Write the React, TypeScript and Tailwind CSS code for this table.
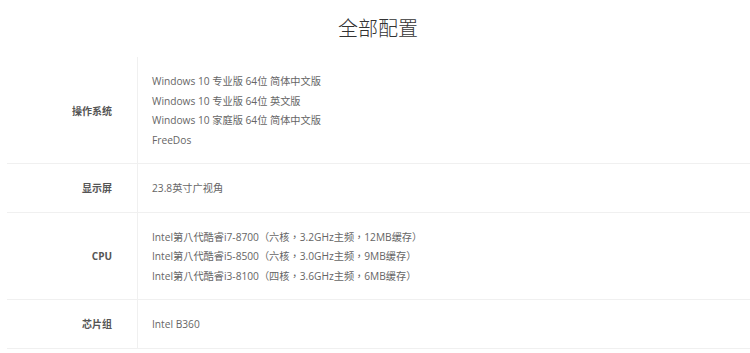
const rows: { label: string; lines: string[] }[] = [
  {
    label: "操作系统",
    lines: [
      "Windows 10 专业版 64位 简体中文版",
      "Windows 10 专业版 64位 英文版",
      "Windows 10 家庭版 64位 简体中文版",
      "FreeDos",
    ],
  },
  { label: "显示屏", lines: ["23.8英寸广视角"] },
  {
    label: "CPU",
    lines: [
      "Intel第八代酷睿i7-8700（六核，3.2GHz主频，12MB缓存）",
      "Intel第八代酷睿i5-8500（六核，3.0GHz主频，9MB缓存）",
      "Intel第八代酷睿i3-8100（四核，3.6GHz主频，6MB缓存）",
    ],
  },
  { label: "芯片组", lines: ["Intel B360"] },
];

export default function App() {
  return (
    <div
      className="w-[750px] h-[353px] overflow-hidden bg-white"
      style={{ fontFamily: '"Open Sans", "Noto Sans CJK SC", sans-serif' }}
    >
      <div className="h-[57px] flex items-center justify-center pl-[6px]">
        <h1 className="text-[20px] leading-[24px] text-[#333] font-light">全部配置</h1>
      </div>

      <div className="ml-[7px]">
        {rows.map((row) => (
          <div key={row.label} className="flex border-b border-[#f0f0f0]">
            <div className="w-[130px] shrink-0 flex items-center justify-end pr-[25px] pt-[2px] text-[10px] font-bold text-[#555]">
              {row.label}
            </div>
            <div
              className="flex-1 border-l border-[#f0f0f0] pl-[14px] pt-[15px] pb-[13px] text-[10.2px] leading-[19.5px] text-[#666]"
              style={{ fontFamily: '"Open Sans", "Noto Sans CJK TC", sans-serif' }}
            >
              {row.lines.map((l) => (
                <div key={l}>{l}</div>
              ))}
            </div>
          </div>
        ))}
      </div>
    </div>
  );
}
